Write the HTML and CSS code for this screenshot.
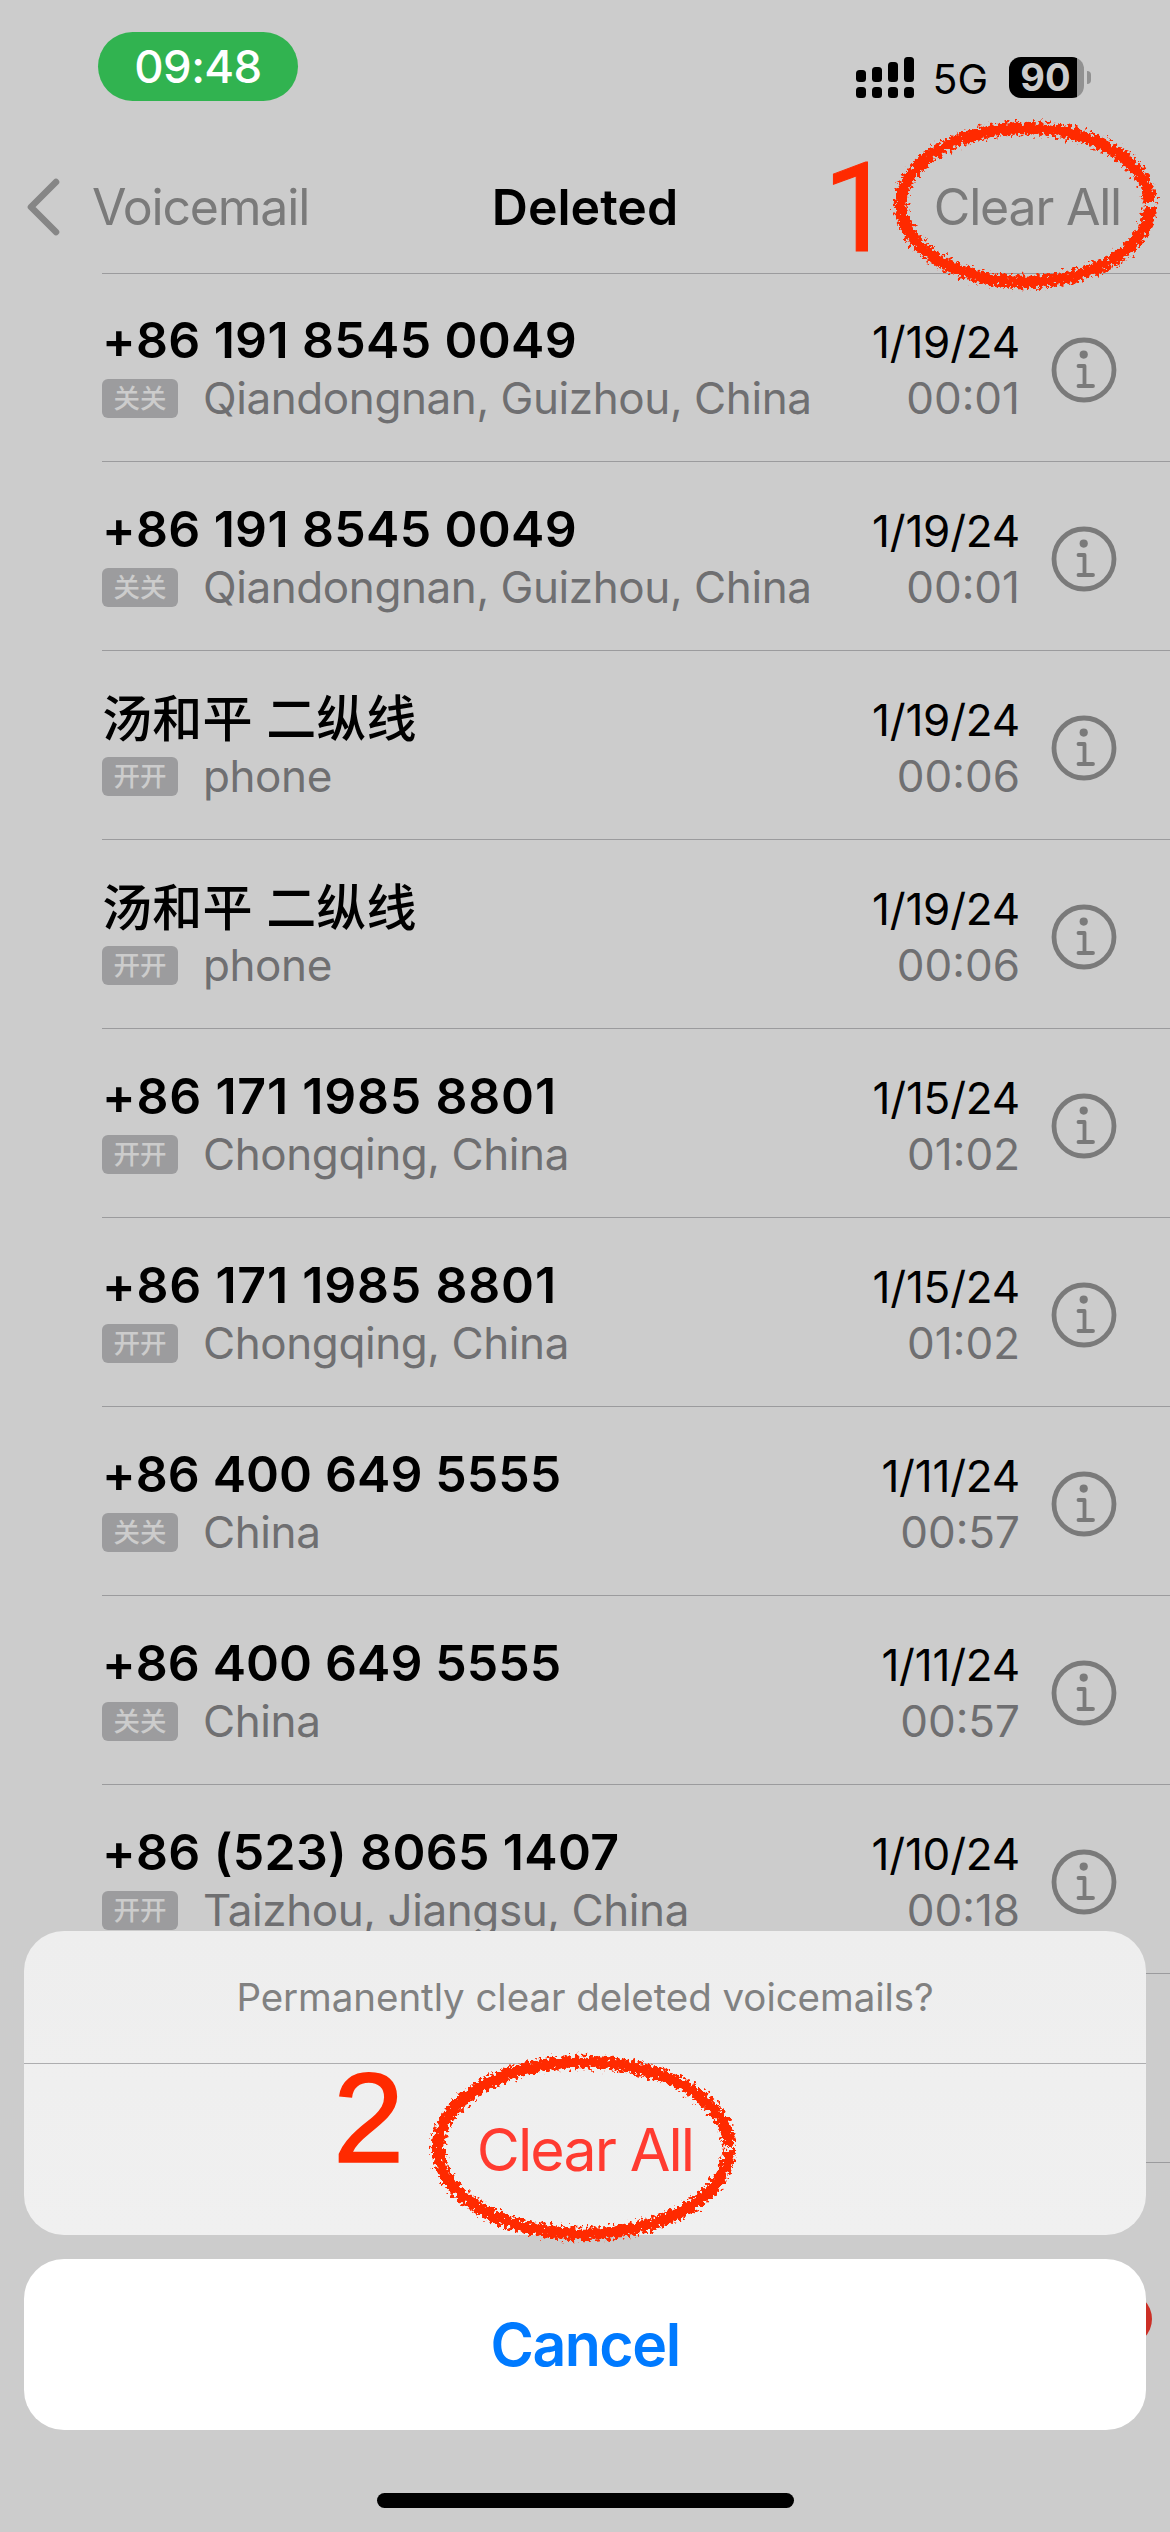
FILE: index.html
```
<!DOCTYPE html>
<html lang="en">
<head>
  <meta charset="UTF-8" />
  <meta name="viewport" content="width=device-width, initial-scale=1.0" />
  <title>Deleted - Voicemail</title>
  <link rel="stylesheet" href="styles.css">
</head>
<body>
  <!-- shared svg definitions -->
  <svg class="defs" width="0" height="0" aria-hidden="true">
    <defs>
      <symbol id="info" viewBox="0 0 66 66">
        <circle cx="33" cy="33" r="30" fill="none" stroke="currentColor" stroke-width="4.8" />
        <circle cx="32.7" cy="17.6" r="4.1" fill="currentColor" />
        <path d="M27.5 29H33.5V49M27.5 49H42" fill="none" stroke="currentColor" stroke-width="3.8" stroke-linecap="round" stroke-linejoin="round" />
      </symbol>
      <filter id="crayon" x="-5%" y="-8%" width="110%" height="116%">
        <feTurbulence type="fractalNoise" baseFrequency="0.28" numOctaves="3" seed="7" result="noise" />
        <feDisplacementMap in="SourceGraphic" in2="noise" scale="14" xChannelSelector="R" yChannelSelector="G" />
      </filter>
    </defs>
  </svg>

  <div class="screen">
    <div class="status-bar">
      <span class="time">09:48</span>
      <div class="status-right">
        <svg class="signal" width="58" height="41" viewBox="0 0 58 41">
          <rect x="0" y="13" width="10" height="12" rx="3.5" />
          <rect x="16" y="10" width="10" height="15" rx="3.5" />
          <rect x="32" y="5" width="10" height="20" rx="3.5" />
          <rect x="48" y="0" width="10" height="25" rx="3.5" />
          <rect x="0" y="30" width="10" height="11" rx="3.5" />
          <rect x="16" y="30" width="10" height="11" rx="3.5" />
          <rect x="32" y="30" width="10" height="11" rx="3.5" />
          <rect x="48" y="30" width="10" height="11" rx="3.5" />
        </svg>
        <span class="network">5G</span>
        <div class="battery"><span class="level">90</span></div>
        <span class="battery-cap"></span>
      </div>
    </div>

    <div class="navbar">
      <a class="back">
        <svg width="36" height="60" viewBox="0 0 36 60">
          <path d="M31 5L6 30L31 55" fill="none" stroke="#868686" stroke-width="6.6" stroke-linecap="round" stroke-linejoin="round" />
        </svg>
        <span>Voicemail</span>
      </a>
      <h1>Deleted</h1>
      <a class="clear">Clear All</a>
    </div>

    <div class="list">
      <div class="row first">
        <div class="caller">
          <div class="name">+86 191 8545 0049</div>
          <div class="sub"><span class="tag">关关</span>Qiandongnan, Guizhou, China</div>
        </div>
        <div class="when"><div class="date">1/19/24</div><div class="length">00:01</div></div>
        <svg class="info"><use href="#info" /></svg>
      </div>
      <div class="row">
        <div class="caller">
          <div class="name">+86 191 8545 0049</div>
          <div class="sub"><span class="tag">关关</span>Qiandongnan, Guizhou, China</div>
        </div>
        <div class="when"><div class="date">1/19/24</div><div class="length">00:01</div></div>
        <svg class="info"><use href="#info" /></svg>
      </div>
      <div class="row">
        <div class="caller">
          <div class="name cn">汤和平 二纵线</div>
          <div class="sub"><span class="tag">开开</span>phone</div>
        </div>
        <div class="when"><div class="date">1/19/24</div><div class="length">00:06</div></div>
        <svg class="info"><use href="#info" /></svg>
      </div>
      <div class="row">
        <div class="caller">
          <div class="name cn">汤和平 二纵线</div>
          <div class="sub"><span class="tag">开开</span>phone</div>
        </div>
        <div class="when"><div class="date">1/19/24</div><div class="length">00:06</div></div>
        <svg class="info"><use href="#info" /></svg>
      </div>
      <div class="row">
        <div class="caller">
          <div class="name wide">+86 171 1985 8801</div>
          <div class="sub"><span class="tag">开开</span>Chongqing, China</div>
        </div>
        <div class="when"><div class="date">1/15/24</div><div class="length">01:02</div></div>
        <svg class="info"><use href="#info" /></svg>
      </div>
      <div class="row">
        <div class="caller">
          <div class="name wide">+86 171 1985 8801</div>
          <div class="sub"><span class="tag">开开</span>Chongqing, China</div>
        </div>
        <div class="when"><div class="date">1/15/24</div><div class="length">01:02</div></div>
        <svg class="info"><use href="#info" /></svg>
      </div>
      <div class="row">
        <div class="caller">
          <div class="name tight">+86 400 649 5555</div>
          <div class="sub"><span class="tag">关关</span>China</div>
        </div>
        <div class="when"><div class="date">1/11/24</div><div class="length">00:57</div></div>
        <svg class="info"><use href="#info" /></svg>
      </div>
      <div class="row">
        <div class="caller">
          <div class="name tight">+86 400 649 5555</div>
          <div class="sub"><span class="tag">关关</span>China</div>
        </div>
        <div class="when"><div class="date">1/11/24</div><div class="length">00:57</div></div>
        <svg class="info"><use href="#info" /></svg>
      </div>
      <div class="row">
        <div class="caller">
          <div class="name">+86 (523) 8065 1407</div>
          <div class="sub"><span class="tag">开开</span>Taizhou, Jiangsu, China</div>
        </div>
        <div class="when"><div class="date">1/10/24</div><div class="length">00:18</div></div>
        <svg class="info"><use href="#info" /></svg>
      </div>
      <div class="row"></div>
    </div>

    <span class="tab-badge"></span>

    <div class="action-sheet">
      <div class="sheet-group">
        <p class="sheet-message">Permanently clear deleted voicemails?</p>
        <button class="sheet-btn destructive">Clear All</button>
      </div>
      <button class="sheet-btn cancel">Cancel</button>
      <span class="home-bar"></span>
    </div>

    <!-- hand-drawn step marks -->
    <span class="step step-1">1</span>
    <svg class="ring ring-1" width="280" height="184" viewBox="0 0 280 184">
      <path d="M264 90A124.500 77 0 1 0 264 94" fill="none" stroke="#ff2a00" stroke-width="12.5" filter="url(#crayon)" />
    </svg>
    <span class="step step-2">2</span>
    <svg class="ring ring-2" width="322" height="204" viewBox="0 0 322 204">
      <path d="M307 100A145.500 86 0 1 0 307 104" fill="none" stroke="#ff2a00" stroke-width="12.5" filter="url(#crayon)" />
    </svg>
  </div>
</body>
</html>
```
FILE: styles.css
```
body {
  margin: 0;
  font-family: Inter, "Noto Sans CJK SC", sans-serif;
  background: #ccc;
  color: #000;
}

.defs {
  position: absolute;
}

.screen {
  position: relative;
  width: 1170px;
  height: 2532px;
  overflow: hidden;
}

/* status bar */
.status-bar {
  display: flex;
  justify-content: space-between;
  align-items: flex-start;
  box-sizing: border-box;
  height: 140px;
  padding: 32px 79px 0 98px;
}

.time {
  width: 200px;
  height: 69px;
  line-height: 69px;
  border-radius: 35px;
  background: #31b350;
  color: white;
  font-size: 45.5px;
  font-weight: 500;
  text-align: center;
  letter-spacing: -0.6px;
}

.status-right {
  display: flex;
  align-items: center;
  height: 41px;
  margin-top: 25px;
}

.network {
  margin: 3px 21px 0 18px;
  font-size: 41px;
  line-height: 40px;
}

.battery {
  width: 75px;
  height: 41px;
  border-radius: 12px;
  background: linear-gradient(to right, #000 68px, #919191 68px);
}

.level {
  display: block;
  width: 73px;
  line-height: 41px;
  color: #ccc;
  font-size: 38px;
  font-weight: 700;
  text-align: center;
}

.battery-cap {
  width: 4px;
  height: 13px;
  margin-left: 3px;
  border-radius: 0 4px 4px 0;
  background: #919191;
}

/* navigation */
.navbar {
  display: grid;
  grid-template-columns: 1fr auto 1fr;
  align-items: center;
  height: 133px;
  padding: 0 49px 0 25px;
  font-size: 50px;
  line-height: 60px;
}

.navbar h1 {
  margin: 0 -24px 0 0;
  font-size: 50px;
  font-weight: 600;
}

.back,
.clear {
  color: #7a7a7a;
  letter-spacing: -1.2px;
}

.back {
  display: flex;
  gap: 31px;
}

.clear {
  text-align: right;
}

/* voicemail list */
.list {
  margin-left: 102px;
  border-top: 1px solid #9b9b9d;
}

.row {
  display: flex;
  align-items: flex-start;
  box-sizing: border-box;
  height: 189px;
  padding: 37px 53px 0 0;
  border-bottom: 1px solid #9b9b9d;
}

.row.first {
  height: 188px;
  padding-top: 36px;
}

.caller {
  flex: 1;
}

.name {
  height: 60px;
  font-size: 50px;
  font-weight: 600;
  line-height: 60px;
  letter-spacing: 0.35px;
}

.name.wide {
  letter-spacing: 0.8px;
}

.name.tight {
  letter-spacing: 0.1px;
}

.name.cn {
  font-weight: 500;
  line-height: 62px;
  letter-spacing: 0.2px;
}

.sub {
  display: flex;
  height: 46px;
  margin-top: 5px;
  color: #6f6f71;
  font-size: 44px;
  line-height: 46px;
  letter-spacing: -0.42px;
}

.tag {
  width: 76px;
  height: 39px;
  margin: 4px 25px 0 0;
  border-radius: 6px;
  background: #9c9c9e;
  color: #ccc;
  font-size: 26.5px;
  font-weight: 500;
  line-height: 39px;
  text-align: center;
  letter-spacing: 0;
}

.when {
  margin-right: 31px;
  font-size: 44px;
  line-height: 46px;
  text-align: right;
}

.date {
  padding-top: 9px;
  letter-spacing: -0.2px;
}

.length {
  margin-top: 10px;
  color: #6f6f71;
}

.info {
  width: 66px;
  height: 66px;
  margin-top: 27px;
  color: #7a7a7a;
}

.tab-badge {
  position: absolute;
  left: 1098px;
  top: 2292px;
  width: 54px;
  height: 54px;
  border-radius: 50%;
  background: #cc2f26;
}

/* action sheet */
.action-sheet {
  position: absolute;
  left: 24px;
  right: 24px;
  top: 1931px;
  display: flex;
  flex-direction: column;
  gap: 24px;
}

.sheet-group {
  display: flex;
  flex-direction: column;
  height: 304px;
  border-radius: 40px;
  overflow: hidden;
  background: linear-gradient(#eee, #f0f0f0);
}

.sheet-message {
  height: 132px;
  margin: 0;
  border-bottom: 1px solid #adadaf;
  color: #818181;
  font-size: 38.5px;
  line-height: 133px;
  text-align: center;
  letter-spacing: -0.06px;
}

.sheet-btn {
  flex: 1;
  padding: 0;
  border: none;
  background: none;
  font-family: inherit;
  font-size: 59px;
}

.destructive {
  color: #ff3b30;
  letter-spacing: -1.9px;
}

.cancel {
  flex: none;
  height: 171px;
  border-radius: 40px;
  background: white;
  color: #007aff;
  font-weight: 600;
  letter-spacing: -1.5px;
}

.home-bar {
  align-self: center;
  width: 417px;
  height: 15px;
  margin-top: 39px;
  border-radius: 8px;
  background: #000;
}

/* step marks */
.step {
  position: absolute;
  color: #ff2a00;
  line-height: 120px;
}

.step-1 {
  left: 823px;
  top: 149px;
  font-family: Roboto, sans-serif;
  font-size: 125px;
  -webkit-text-stroke: 1px #ff2a00;
}

.step-2 {
  left: 333px;
  top: 2058px;
  font-family: "Liberation Sans", sans-serif;
  font-size: 128px;
  -webkit-text-stroke: 1.5px #ff2a00;
}

.ring {
  position: absolute;
}

.ring-1 {
  left: 886px;
  top: 113px;
}

.ring-2 {
  left: 422px;
  top: 2046px;
}
```
